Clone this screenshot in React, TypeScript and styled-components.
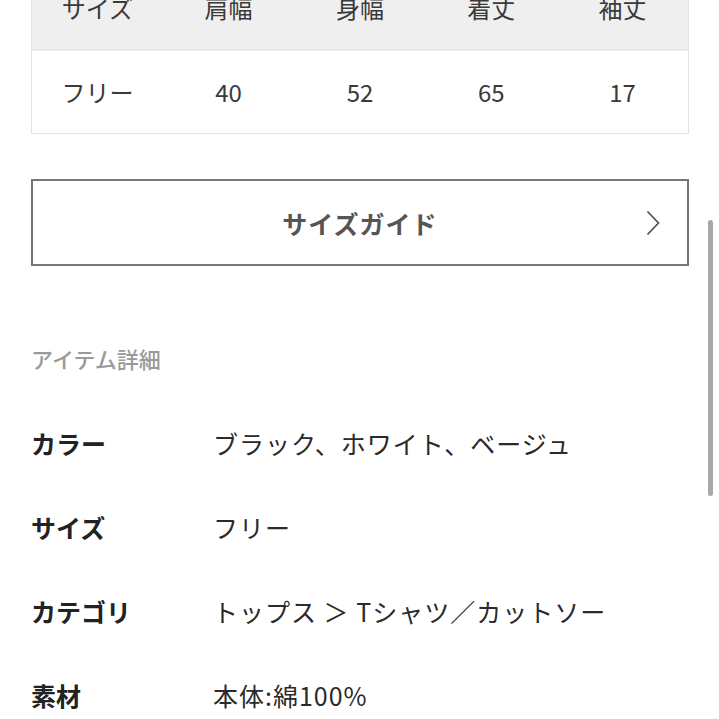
import React from 'react';
import styled, { createGlobalStyle } from 'styled-components';

const GlobalStyle = createGlobalStyle`
  html, body {
    margin: 0;
    padding: 0;
    background: #fff;
    overflow: hidden;
  }
  body {
    font-family: "Noto Sans CJK JP", "Noto Sans", sans-serif;
    color: #333;
  }
`;

const Page = styled.div`
  padding: 0 30px 0 31px;
  height: 719px;
  overflow: hidden;
`;

const SizeTable = styled.table`
  width: 100%;
  margin-top: -36px;
  border-collapse: collapse;
  border: 1px solid #e4e4e4;
  table-layout: fixed;
`;

const HeadCell = styled.th`
  height: 84px;
  background: #efefef;
  font-weight: 400;
  font-size: 24px;
  color: #3a3a3a;
  text-align: center;
  padding: 0;
`;

const BodyCell = styled.td`
  height: 80px;
  background: #fff;
  font-size: 24px;
  color: #3a3a3a;
  text-align: center;
  padding: 0 0 2px;
  border-top: 2px solid #e8e8e8;
`;

const GuideButton = styled.button`
  position: relative;
  display: flex;
  align-items: center;
  justify-content: center;
  width: 100%;
  height: 87px;
  margin-top: 45px;
  background: #fff;
  border: 2px solid #777;
  font-family: inherit;
  font-size: 25px;
  font-weight: 700;
  letter-spacing: 1px;
  color: #555;
  padding: 0;
`;

const Chevron = styled.span`
  position: absolute;
  right: 27px;
  top: 50%;
  transform: translateY(-50%);
  display: flex;
`;

const SectionTitle = styled.h3`
  margin: 77px 0 0;
  font-size: 22px;
  font-weight: 500;
  color: #9a9a9a;
  line-height: 30px;
`;

const DetailList = styled.dl`
  display: grid;
  grid-template-columns: 182px 1fr;
  grid-auto-rows: 84px;
  margin: 28px 0 0;
`;

const Label = styled.dt`
  display: flex;
  align-items: center;
  font-size: 25px;
  font-weight: 700;
  color: #222;
`;

const Value = styled.dd`
  display: flex;
  align-items: center;
  margin: 0;
  font-size: 25px;
  color: #2a2a2a;
  letter-spacing: 1px;
`;

const ScrollThumb = styled.div`
  position: fixed;
  right: 6px;
  top: 220px;
  width: 5px;
  height: 276px;
  border-radius: 3px;
  background: #a8a8a8;
`;

const headers = ['サイズ', '肩幅', '身幅', '着丈', '袖丈'];
const values = ['フリー', '40', '52', '65', '17'];

const details = [
  ['カラー', 'ブラック、ホワイト、ベージュ'],
  ['サイズ', 'フリー'],
  ['カテゴリ', 'トップス ＞ Tシャツ／カットソー'],
  ['素材', '本体:綿100%'],
];

const App: React.FC = () => {
  return (
    <>
      <GlobalStyle />
      <Page>
        <SizeTable>
          <thead>
            <tr>
              {headers.map((h) => (
                <HeadCell key={h}>{h}</HeadCell>
              ))}
            </tr>
          </thead>
          <tbody>
            <tr>
              {values.map((v) => (
                <BodyCell key={v}>{v}</BodyCell>
              ))}
            </tr>
          </tbody>
        </SizeTable>

        <GuideButton>
          サイズガイド
          <Chevron>
            <svg width="14" height="26" viewBox="0 0 14 26" fill="none">
              <path d="M1.5 1.5 L12.5 13 L1.5 24.5" stroke="#555" strokeWidth="1.8" />
            </svg>
          </Chevron>
        </GuideButton>

        <SectionTitle>アイテム詳細</SectionTitle>

        <DetailList>
          {details.map(([label, value]) => (
            <React.Fragment key={label}>
              <Label>{label}</Label>
              <Value>{value}</Value>
            </React.Fragment>
          ))}
        </DetailList>
      </Page>
      <ScrollThumb />
    </>
  );
};

export default App;
